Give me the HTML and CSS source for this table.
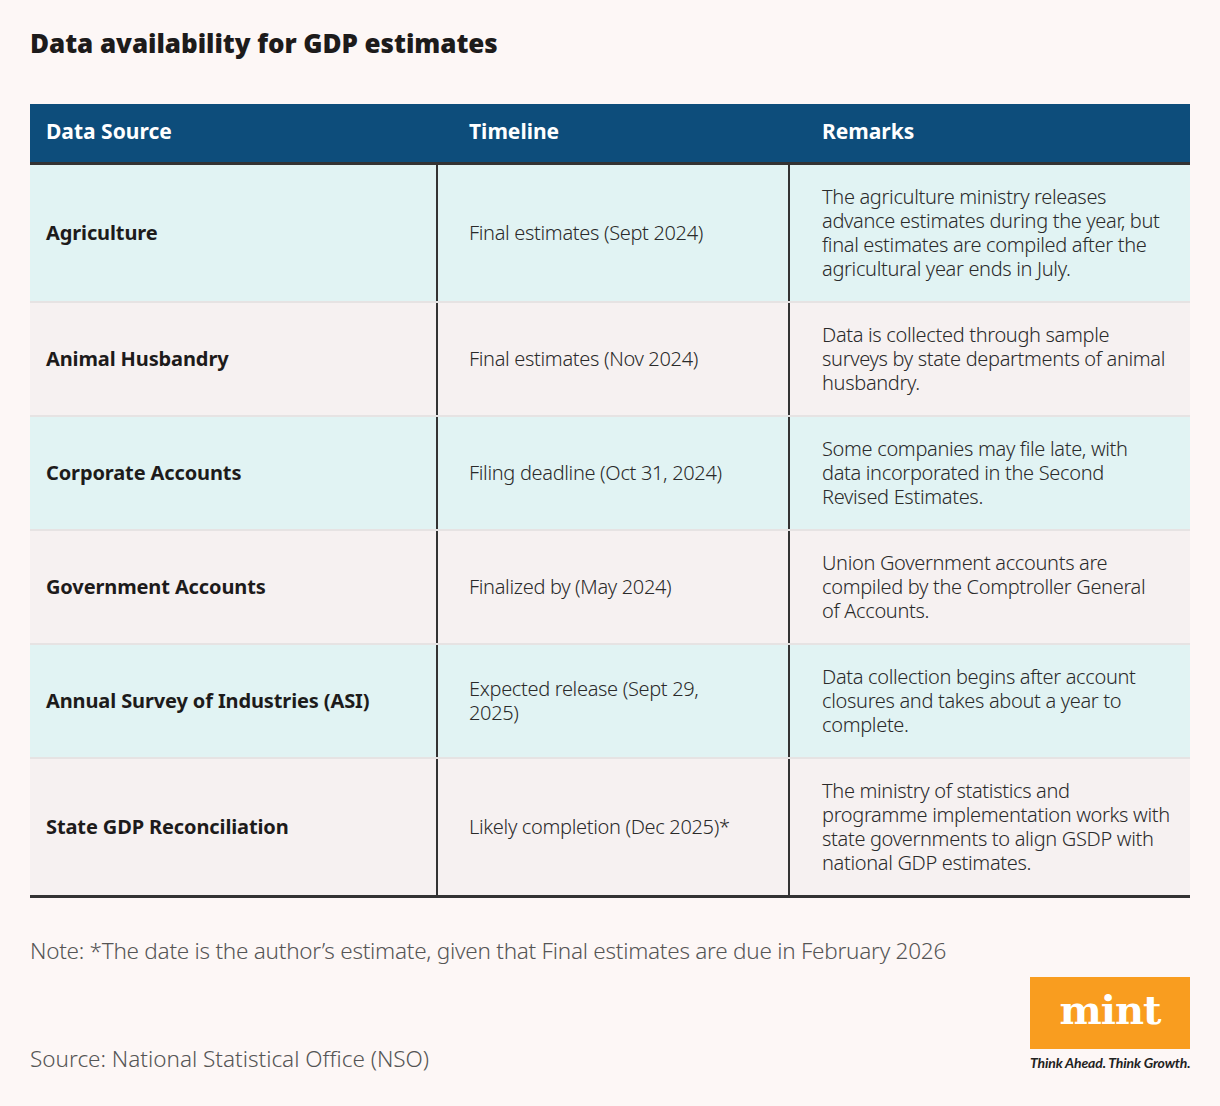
FILE: index.html
```html
<!DOCTYPE html>
<html lang="en">
<head>
<meta charset="utf-8">
<title>Data availability for GDP estimates</title>
<link rel="stylesheet" href="styles.css">
</head>
<body>
<div class="page">
  <h1 class="title">Data availability for GDP estimates</h1>
  <table class="data">
    <thead>
      <tr>
        <th class="c1">Data Source</th>
        <th class="c2">Timeline</th>
        <th class="c3">Remarks</th>
      </tr>
    </thead>
    <tbody>
      <tr class="teal">
        <td class="c1">Agriculture</td>
        <td class="c2">Final estimates (Sept 2024)</td>
        <td class="c3">The agriculture ministry releases
advance estimates during the year, but
final estimates are compiled after the
agricultural year ends in July.</td>
      </tr>
      <tr class="rose">
        <td class="c1">Animal Husbandry</td>
        <td class="c2">Final estimates (Nov 2024)</td>
        <td class="c3">Data is collected through sample
surveys by state departments of animal
husbandry.</td>
      </tr>
      <tr class="teal">
        <td class="c1">Corporate Accounts</td>
        <td class="c2">Filing deadline (Oct 31, 2024)</td>
        <td class="c3">Some companies may file late, with
data incorporated in the Second
Revised Estimates.</td>
      </tr>
      <tr class="rose">
        <td class="c1">Government Accounts</td>
        <td class="c2">Finalized by (May 2024)</td>
        <td class="c3">Union Government accounts are
compiled by the Comptroller General
of Accounts.</td>
      </tr>
      <tr class="teal">
        <td class="c1">Annual Survey of Industries (ASI)</td>
        <td class="c2">Expected release (Sept 29, 2025)</td>
        <td class="c3">Data collection begins after account
closures and takes about a year to
complete.</td>
      </tr>
      <tr class="rose last">
        <td class="c1">State GDP Reconciliation</td>
        <td class="c2">Likely completion (Dec 2025)*</td>
        <td class="c3">The ministry of statistics and
programme implementation works with
state governments to align GSDP with
national GDP estimates.</td>
      </tr>
    </tbody>
  </table>
  <div class="footer">
    <div class="notes">
      <p class="note">Note: *The date is the author’s estimate, given that Final estimates are due in February 2026</p>
      <p class="source">Source: National Statistical Office (NSO)</p>
    </div>
    <div class="brand">
      <div class="logo"><span class="logo-word">mint</span></div>
      <div class="tagline">Think Ahead. Think Growth.</div>
    </div>
  </div>
</div>
</body>
</html>
```
FILE: styles.css
```css
* { box-sizing: border-box; }
html, body {
  margin: 0;
  padding: 0;
  background: #fdf7f6;
}
body {
  font-family: "Noto Sans", "Open Sans", "Liberation Sans", sans-serif;
  color: #222;
}
.page {
  width: 1220px;
  height: 1106px;
  padding: 25px 30px 0 30px;
}
.title {
  margin: 0;
  font-size: 26px;
  line-height: 36px;
  font-weight: 900;
  color: #1d1b1b;
  letter-spacing: -0.05px;
}
.data {
  margin-top: 43px;
  width: 1160px;
  border-collapse: collapse;
  table-layout: fixed;
  font-size: 20px;
  line-height: 24px;
}
.data th {
  background: #0d4d7b;
  color: #fff;
  font-size: 21px;
  font-weight: 700;
  text-align: left;
  padding: 15px 0 19px;
  border-bottom: 3px solid #333;
  letter-spacing: 0;
}
.data td {
  padding: 20px 10px 20px 0;
  border-bottom: 2px solid #e6e3e3;
  vertical-align: middle;
  color: #2a2a2a;
  font-weight: 300;
  letter-spacing: -0.33px;
}
.data tr.last td { border-bottom: 3px solid #333; }
.data .c1 { width: 407px; padding-left: 16px; }
.data .c2 { width: 352px; padding-left: 31px; }
.data td.c2 { padding-right: 48px; }
.data .c3 { width: 401px; padding-left: 32px; }
.data td.c3 { white-space: pre-line; }
.data td.c1 {
  font-weight: 700;
  color: #1d1b1b;
  letter-spacing: -0.12px;
}
.data td.c2, .data td.c3 { border-left: 2px solid #333; }
.data th.c2, .data th.c3 { border-left: 2px solid #0d4d7b; }
.teal td { background: #e1f3f3; }
.rose td { background: #f6f1f1; }

.footer {
  display: flex;
  justify-content: space-between;
  align-items: flex-start;
}
.notes p {
  margin: 0;
  font-size: 22.5px;
  line-height: 30px;
  font-weight: 300;
  color: #555;
}
.note { margin-top: 38px !important; letter-spacing: -0.25px; }
.source { margin-top: 78px !important; letter-spacing: 0; }
.brand {
  margin-top: 79px;
  width: 160px;
  display: flex;
  flex-direction: column;
  align-items: stretch;
}
.logo {
  height: 72px;
  background: #f99d1f;
  display: flex;
  align-items: center;
  justify-content: center;
}
.logo-word {
  font-family: "DejaVu Serif", "Liberation Serif", serif;
  font-weight: 700;
  font-size: 40px;
  color: #fff;
  letter-spacing: -1px;
  line-height: 1;
  margin-top: -6px;
}
.tagline {
  margin-top: 5px;
  font-family: Lato, "Noto Sans", sans-serif;
  font-size: 14px;
  font-style: italic;
  font-weight: 700;
  color: #222;
  letter-spacing: -0.15px;
  white-space: nowrap;
}
```
